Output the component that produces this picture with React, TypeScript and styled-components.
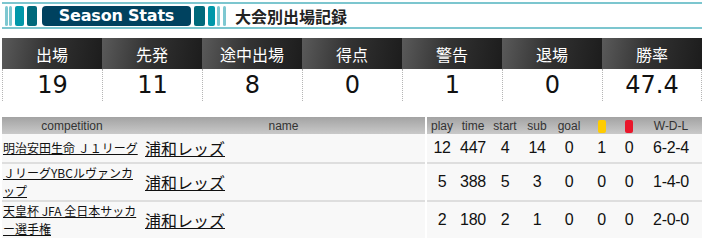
import React from "react";
import styled, { createGlobalStyle } from "styled-components";

const Global = createGlobalStyle`
  html, body { margin: 0; padding: 0; background: #fff; }
  body { font-family: "Liberation Sans", "Noto Sans CJK JP", sans-serif; color: #111; }
`;

const Page = styled.div`
  width: 700px;
  padding: 0 2px;
`;

const TitleBar = styled.div`
  display: flex;
  align-items: center;
  height: 23px;
  margin-top: 2px;
  padding-left: 3px;
  border-top: 2px solid #7cc6cf;
  border-bottom: 2px solid #7cc6cf;
`;

const Bar = styled.span<{ $w: number; $c: string; $ml: number }>`
  display: block;
  flex: none;
  width: ${(p) => p.$w}px;
  height: 20px;
  margin-left: ${(p) => p.$ml}px;
  background: ${(p) => p.$c};
  border-radius: 2px;
`;

const SeasonBox = styled.span`
  display: flex;
  flex: none;
  align-items: center;
  justify-content: center;
  width: 149px;
  height: 20px;
  margin-left: 5px;
  background: #00425f;
  border-radius: 4px;
  color: #fff;
  font-family: "DejaVu Sans", sans-serif;
  font-weight: bold;
  font-size: 16px;
  letter-spacing: -0.2px;
`;

const TitleText = styled.span`
  margin-left: 9px;
  font-family: "Noto Sans CJK JP", sans-serif;
  font-weight: bold;
  font-size: 16px;
  color: #222;
`;

const StatsGrid = styled.div`
  display: grid;
  grid-template-columns: repeat(7, 100px);
  margin-top: 9px;
`;

const StatHead = styled.div`
  height: 31px;
  display: flex;
  align-items: center;
  justify-content: center;
  background: linear-gradient(100deg, #5a5a5a 0%, #333 45%, #1c1c1c 100%);
  color: #fff;
  font-family: "Noto Sans CJK JP", sans-serif;
  font-size: 16px;
`;

const StatValue = styled.div<{ $last?: boolean }>`
  height: 32px;
  display: flex;
  align-items: center;
  justify-content: center;
  border-left: 1px dotted #b5b5b5;
  ${(p) => (p.$last ? "border-right: 1px dotted #b5b5b5;" : "")}
  font-family: "DejaVu Sans", sans-serif;
  font-size: 24px;
  color: #111;
`;

const DataTable = styled.table`
  margin-top: 16px;
  width: 700px;
  border-collapse: collapse;
  table-layout: fixed;
`;

const Th = styled.th<{ $sep?: boolean }>`
  height: 17px;
  padding: 0;
  background: linear-gradient(#a3a3a3, #c9c9c9);
  color: #333;
  font-weight: normal;
  font-size: 12px;
  text-align: center;
  ${(p) => (p.$sep ? "border-left: 2px solid #fff;" : "")}
`;

const Row = styled.tr`
  & + & td { border-top: 2px solid #dedede; }
`;

const Td = styled.td<{ $sep?: boolean }>`
  height: 28px;
  padding: 0;
  background: #f8f8f8;
  vertical-align: middle;
  text-align: center;
  font-size: 16px;
  letter-spacing: -0.3px;
  color: #111;
  ${(p) => (p.$sep ? "border-left: 2px solid #fff;" : "")}
`;

const CompCell = styled(Td)`
  text-align: left;
  padding-left: 1px;
  font-family: "Noto Sans CJK JP", sans-serif;
  font-size: 12px;
  letter-spacing: 0;
  line-height: 18px;
`;

const NameCell = styled(Td)`
  text-align: left;
  padding-left: 3px;
  font-family: "Noto Sans CJK JP", sans-serif;
  font-size: 16px;
  letter-spacing: 0;
`;

const Link = styled.a`
  color: #111;
  text-decoration: underline;
`;

const Card = styled.span<{ $c: string }>`
  display: inline-block;
  width: 8px;
  height: 13px;
  border-radius: 2px;
  background: ${(p) => p.$c};
  vertical-align: middle;
`;

const stats = [
  ["出場", "19"],
  ["先発", "11"],
  ["途中出場", "8"],
  ["得点", "0"],
  ["警告", "1"],
  ["退場", "0"],
  ["勝率", "47.4"],
];

const rows = [
  ["明治安田生命 Ｊ１リーグ", "12", "447", "4", "14", "0", "1", "0", "6-2-4"],
  ["ＪリーグYBCルヴァンカップ", "5", "388", "5", "3", "0", "0", "0", "1-4-0"],
  ["天皇杯 JFA 全日本サッカー選手権", "2", "180", "2", "1", "0", "0", "0", "2-0-0"],
];

const widths = [140, 284, 31, 32, 32, 32, 32, 33, 22, 62];

export default function App() {
  return (
    <Page>
      <Global />
      <TitleBar>
        <Bar $w={3} $c="#7ec8d1" $ml={0} />
        <Bar $w={3} $c="#7ec8d1" $ml={1} />
        <Bar $w={9} $c="#0097a9" $ml={3} />
        <Bar $w={10} $c="#00697b" $ml={3} />
        <SeasonBox>Season Stats</SeasonBox>
        <Bar $w={11} $c="#00697b" $ml={3} />
        <Bar $w={7} $c="#0097a9" $ml={3} />
        <Bar $w={3} $c="#7ec8d1" $ml={2} />
        <Bar $w={3} $c="#7ec8d1" $ml={3} />
        <TitleText>大会別出場記録</TitleText>
      </TitleBar>

      <StatsGrid>
        {stats.map(([k]) => (
          <StatHead key={k}>{k}</StatHead>
        ))}
        {stats.map(([k, v], i) => (
          <StatValue key={k} $last={i === stats.length - 1}>
            {v}
          </StatValue>
        ))}
      </StatsGrid>

      <DataTable>
        <colgroup>
          {widths.map((w, i) => (
            <col key={i} style={{ width: w }} />
          ))}
        </colgroup>
        <thead>
          <tr>
            <Th>competition</Th>
            <Th>name</Th>
            <Th $sep>play</Th>
            <Th>time</Th>
            <Th>start</Th>
            <Th>sub</Th>
            <Th>goal</Th>
            <Th>
              <Card $c="#ffcc00" />
            </Th>
            <Th>
              <Card $c="#e9172b" />
            </Th>
            <Th>W-D-L</Th>
          </tr>
        </thead>
        <tbody>
          {rows.map((r) => (
            <Row key={r[0]}>
              <CompCell>
                <Link href="#">{r[0]}</Link>
              </CompCell>
              <NameCell>
                <Link href="#">浦和レッズ</Link>
              </NameCell>
              {r.slice(1).map((v, i) => (
                <Td key={i} $sep={i === 0}>
                  {v}
                </Td>
              ))}
            </Row>
          ))}
        </tbody>
      </DataTable>
    </Page>
  );
}
